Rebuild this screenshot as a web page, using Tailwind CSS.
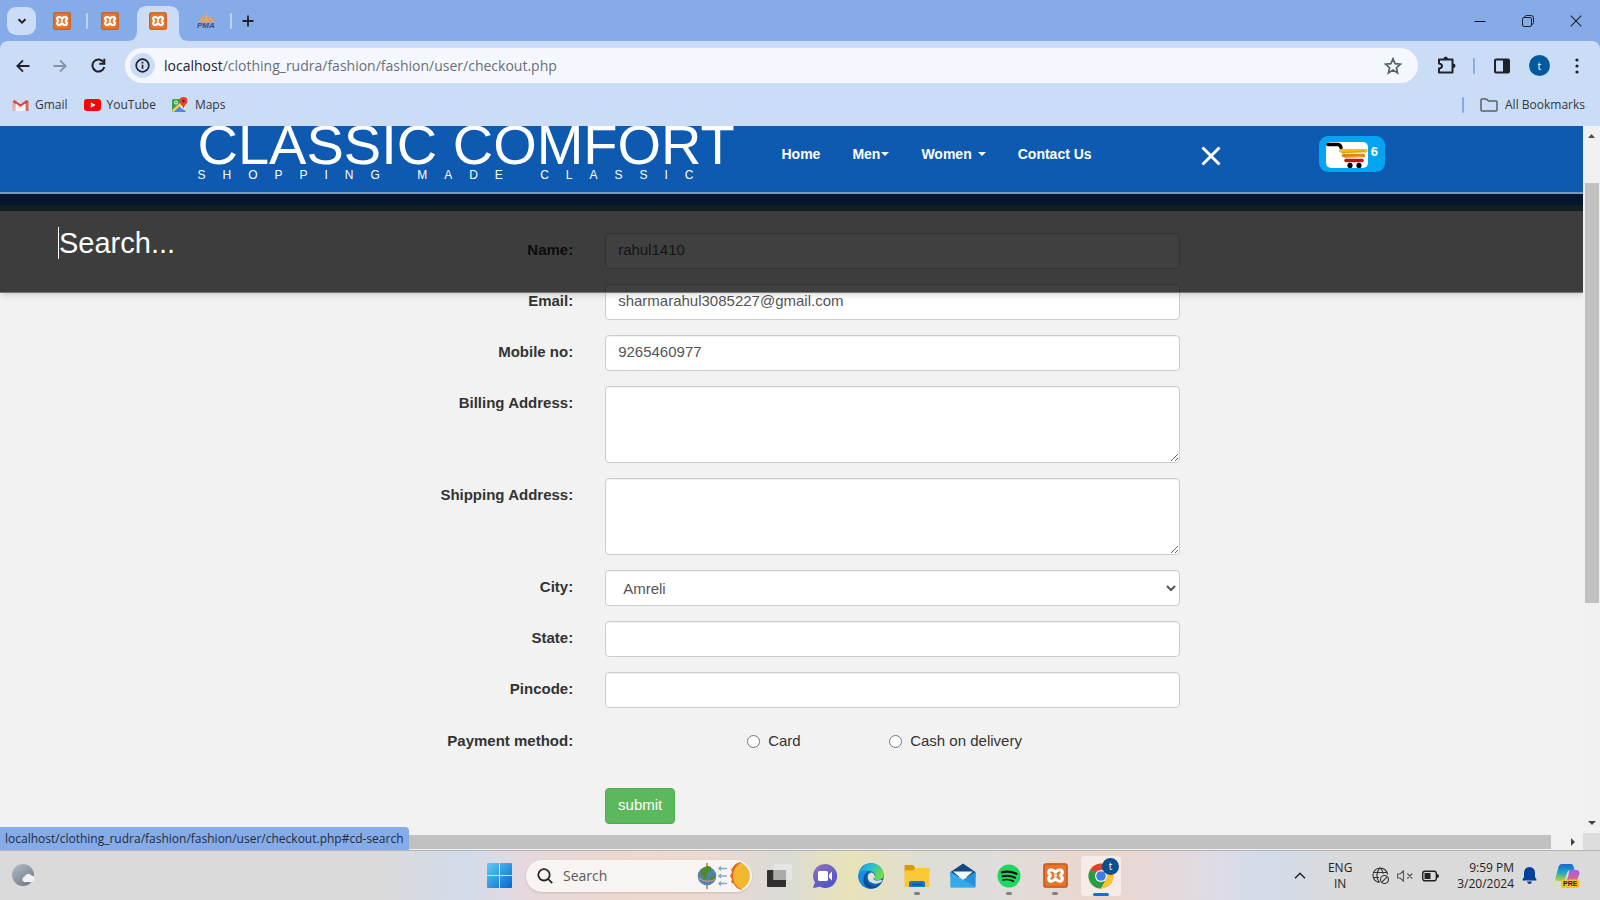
<!DOCTYPE html>
<html lang="en">
<head>
<meta charset="utf-8">
<meta name="viewport" content="width=device-width, initial-scale=1">
<title>Classic Comfort - Checkout</title>
<script src="https://cdn.jsdelivr.net/npm/@tailwindcss/browser@4"></script>
</head>
<body class="flex h-screen flex-col overflow-hidden bg-[#f2f2f2] font-['Liberation_Sans',sans-serif]">

<svg class="hidden" aria-hidden="true">
  <symbol id="xampp" viewBox="0 0 24 24">
    <rect x=".5" y=".5" width="23" height="23" rx="2.5" fill="#e8742a"/>
    <rect x="1" y="1" width="22" height="22" rx="2" fill="none" stroke="#c65a1c" stroke-width="1.5"/>
    <path d="M8 6.500Q10 6.500 12 9q2-2.500 4-2.500a2.500 2.500 0 0 1 1.500 4.500q-1 1 0 2a2.500 2.500 0 0 1-1.500 4.500q-2 0-4-2.500-2 2.500-4 2.500A2.500 2.500 0 0 1 6.500 13q1-1 0-2A2.500 2.500 0 0 1 8 6.500z" fill="none" stroke="#fff" stroke-width="3" stroke-linejoin="round"/>
    <path d="M10.500 12h3" stroke="#fff" stroke-width="2"/>
  </symbol>
</svg>

<!-- Browser frame -->
<header class="shrink-0 bg-[#85abe9] font-['Open_Sans','Noto_Sans',sans-serif] text-[#1f2329]">
  <div class="flex h-[41px] items-center">
    <button aria-label="Search tabs" class="ml-[7px] mr-[2px] flex h-7 w-[29px] items-center justify-center rounded-[9px] bg-[#cbdcf6]">
      <svg class="size-3" viewBox="0 0 12 12" fill="none" stroke="#1f2329" stroke-width="2"><path d="M2.500 4.200 6 7.700l3.500-3.500"/></svg>
    </button>
    <nav aria-label="Tabs" class="flex h-full items-center">
      <button aria-label="XAMPP tab 1" class="flex h-full w-12 items-center justify-center"><svg class="size-[18px]"><use href="#xampp"/></svg></button>
      <span class="h-4 w-[2px] -mr-[2px] rounded bg-[#bed2f4]"></span>
      <button aria-label="XAMPP tab 2" class="flex h-full w-12 items-center justify-center"><svg class="size-[18px]"><use href="#xampp"/></svg></button>
      <button aria-label="XAMPP active tab" class="relative flex h-full w-12 items-center justify-center">
        <svg class="absolute bottom-0 -left-[7px] h-[35px] w-[62px]" viewBox="0 0 62 35"><path d="M0 35Q10 35 10 25V10Q10 0 20 0H42Q52 0 52 10V25Q52 35 62 35Z" fill="#cbdcf6"/></svg>
        <svg class="relative size-[18px]"><use href="#xampp"/></svg>
      </button>
      <button aria-label="phpMyAdmin tab" class="flex h-full w-12 items-center justify-center">
        <svg class="h-[17px] w-[18px]" viewBox="0 0 18 17"><path d="M1.500 10.500Q4 7 6 3.500L6.500 10zM7 10.500Q8 5 8.500.5 12 5 12 10zM12.500 10Q13 6 12.500 3.500 16 7 16.500 10z" fill="#f0a050"/><text x="0" y="16" font-family="Liberation Sans" font-size="8" font-weight="bold" font-style="italic" fill="#3d4a85">PMA</text></svg>
      </button>
      <span class="h-4 w-[2px] rounded bg-[#bed2f4]"></span>
      <button aria-label="New tab" class="flex h-full w-8 items-center justify-center">
        <svg class="size-3" viewBox="0 0 12 12" stroke="#1f2329" stroke-width="1.800"><path d="M6 .5v11M.5 6h11"/></svg>
      </button>
    </nav>
    <div class="ml-auto flex h-full">
      <button aria-label="Minimize" class="flex w-12 items-center justify-center"><svg class="size-3" viewBox="0 0 12 12" stroke="#111"><path d="M.5 6.500h11"/></svg></button>
      <button aria-label="Restore" class="flex w-12 items-center justify-center"><svg class="size-3" viewBox="0 0 12 12" fill="none" stroke="#222"><rect x=".5" y="2.500" width="9" height="9" rx="1.500"/><path d="M2.500 2Q3 .5 4.500.5H9Q11.500.5 11.500 3V7.500Q11.500 9 10 9.500"/></svg></button>
      <button aria-label="Close" class="flex w-12 items-center justify-center"><svg class="size-3" viewBox="0 0 12 12" stroke="#222" stroke-width="1.100"><path d="m.7.700 10.600 10.600M11.300.7.700 11.300"/></svg></button>
    </div>
  </div>

  <div class="rounded-t-lg bg-[#cbdcf6]">
    <div class="flex h-[49px] items-center pl-1 pr-[5px]">
      <button aria-label="Back" class="flex w-[37px] justify-center"><svg class="size-[14px]" viewBox="0 0 14 14" fill="none" stroke="#1f2329" stroke-width="1.800"><path d="M13.500 7H1.500M7 1.300 1.300 7 7 12.700"/></svg></button>
      <button aria-label="Forward" class="flex w-[37px] justify-center"><svg class="size-[14px]" viewBox="0 0 14 14" fill="none" stroke="#8591a6" stroke-width="1.800"><path d="M.5 7h12M7 1.300 12.700 7 7 12.700"/></svg></button>
      <button aria-label="Reload" class="flex w-10 justify-center"><svg class="size-[15px]" viewBox="0 0 15 15" fill="none" stroke="#1f2329" stroke-width="2"><path d="M12.500 4.200A6 6 0 1 0 13.300 9"/><path d="M13.300.8v5H8.300"/></svg></button>
      <div class="ml-[7px] flex h-[35px] flex-1 items-center rounded-full bg-[#f4f8fe] pl-[5px] pr-4">
        <button aria-label="Site information" class="flex size-[25px] items-center justify-center rounded-full bg-[#cbdcf6]"><svg class="size-[15px]" viewBox="0 0 15 15" fill="none" stroke="#1f2329" stroke-width="1.700"><circle cx="7.500" cy="7.500" r="6.300"/><path d="M7.500 6.800v4M7.500 3.800v1.700"/></svg></button>
        <p class="ml-[9px] flex-1 text-[14px] leading-5 text-[#6a6e75]"><span class="text-[#1f2329]">localhost</span>/clothing_rudra/fashion/fashion/user/checkout.php</p>
        <button aria-label="Bookmark this page"><svg class="size-[18px]" viewBox="0 0 18 18" fill="none" stroke="#5b5f66" stroke-width="1.700"><path d="m9 1.800 2.100 4.900 5.300.5-4 3.500 1.200 5.200L9 13.100l-4.600 2.800 1.200-5.200-4-3.500 5.300-.5z"/></svg></button>
      </div>
      <button aria-label="Extensions" class="ml-[10px] flex w-9 justify-center"><svg class="size-[19px]" viewBox="0 0 19 19" fill="none" stroke="#1f2329" stroke-width="2"><path d="M2 3.500h13.500v13H2v-4q3-.5 3-2.500T2 7.500z" stroke-linejoin="round"/><path d="M6.500 3q0-2.500 2.200-2.500T11 3zM16 7.500q2.500 0 2.500 2.300T16 12z" fill="#1f2329" stroke="none"/></svg></button>
      <span class="mx-[9px] h-4 w-[2px] rounded bg-[#85abe9]"></span>
      <button aria-label="Side panel" class="flex w-9 justify-center"><svg class="size-4" viewBox="0 0 16 16"><rect x="1" y="1.500" width="14" height="13" rx="1" fill="none" stroke="#1f2329" stroke-width="2"/><path d="M9 2h6v12H9z" fill="#1f2329"/></svg></button>
      <button aria-label="Profile" class="mx-[9px] flex size-[21px] items-center justify-center rounded-full bg-[#04599c] text-[11px] leading-none text-white">t</button>
      <button aria-label="Browser menu" class="flex w-9 justify-center"><svg class="h-4 w-1" viewBox="0 0 4 16" fill="#1f2329"><circle cx="2" cy="2" r="1.600"/><circle cx="2" cy="8" r="1.600"/><circle cx="2" cy="14" r="1.600"/></svg></button>
    </div>
    <div class="flex h-9 items-center gap-4 pl-[12px] pr-[15px] pb-[7px] text-[12px] leading-4 text-[#33373d]">
      <a href="#" class="flex items-center gap-[6px]"><svg class="h-3 w-[17px]" viewBox="0 0 17 12"><path d="M1.800 12V2" stroke="#e8a8a4" stroke-width="2.600"/><path d="M15.200 12V2" stroke="#d9655c" stroke-width="2.600"/><path d="M1.500 1.700 8.500 7l7-5.300" fill="none" stroke="#d9463c" stroke-width="2.600"/><path d="M4 4.500V12h9V4.500L8.500 8z" fill="#f3f3f6"/></svg>Gmail</a>
      <a href="#" class="flex items-center gap-[6px]"><svg class="h-3 w-[17px]" viewBox="0 0 17 12"><rect width="17" height="12" rx="3" fill="#f00"/><path d="m6.800 3.300 4.700 2.700-4.700 2.700z" fill="#fff"/></svg>YouTube</a>
      <a href="#" class="flex items-center gap-[7px]"><svg class="size-4" viewBox="0 0 16 16"><rect y="2" width="14" height="13" rx="1.500" fill="#34a352"/><path d="m1 15 6-6 6 6z" fill="#4b86ee"/><path d="M6 10 12.500 3 14 5v9z" fill="#dfe6ee"/><path d="m0 13 10-9 2 2-10 9H1z" fill="#f8cc46"/><path d="m2 15 5.500-5.500L13 15z" fill="#4b86ee"/><circle cx="4" cy="5.500" r="1.500" fill="none" stroke="#fff"/><path d="M11.500 0A4 4 0 0 1 15.500 4c0 2.500-2.700 3.500-4 7.500-1.300-4-4-5-4-7.500A4 4 0 0 1 11.500 0z" fill="#e14536"/><circle cx="11.500" cy="4" r="1.400" fill="#8e1a12"/></svg>Maps</a>
      <a href="#" class="ml-auto flex items-center gap-[7px]"><span class="mr-[9px] h-4 w-[2px] rounded bg-[#85abe9]"></span><svg class="h-[14px] w-[18px]" viewBox="0 0 18 14" fill="none" stroke="#5b5f66" stroke-width="1.500"><path d="M1 2q0-1 1-1h4.500l2 2H16q1 0 1 1v8q0 1-1 1H2q-1 0-1-1z"/></svg>All Bookmarks</a>
    </div>
  </div>
</header>

<!-- Page viewport -->
<div class="relative flex min-h-0 flex-1">
  <main class="relative min-w-0 flex-1 overflow-hidden bg-[#f2f2f2] text-[15px] leading-5 text-[#333]">
    <div class="h-[85px] border-b-[6px] border-[#48748f] bg-[#0e5ab0] text-white">
      <div class="mx-auto flex h-[66px] max-w-[1214px] items-end pl-[13px]">
        <a href="#" class="block w-[584px] shrink-0 whitespace-nowrap pb-[9px]">
          <span class="block text-[56px] leading-[44px]">CLASSIC COMFORT</span>
          <span class="block text-[12px] leading-4 tracking-[17px]">SHOPPING MADE CLASSIC</span>
        </a>
        <nav class="flex gap-8 whitespace-nowrap pb-[28px] text-[14px] leading-5 font-bold">
          <a href="#">Home</a>
          <a href="#" class="flex items-center">Men<svg class="ml-px h-1 w-2" viewBox="0 0 8 4" fill="#fff"><path d="M0 0h8L4 4z"/></svg></a>
          <a href="#" class="flex items-center">Women<svg class="ml-[6px] h-1 w-2" viewBox="0 0 8 4" fill="#fff"><path d="M0 0h8L4 4z"/></svg></a>
          <a href="#">Contact Us</a>
        </nav>
        <a href="#cd-search" aria-label="Close search" class="ml-[109px] mb-[26px]"><svg class="size-5" viewBox="0 0 20 20" stroke="#fff" stroke-width="3"><path d="m1.500 1.500 17 17M18.500 1.500l-17 17"/></svg></a>
        <a href="#" aria-label="Cart, 6 items" class="ml-[98px] mb-[20px] flex h-9 w-[66px] rounded-[9px] bg-[#03a5f3] pl-[7px] pt-[6px] text-[13px] leading-5 font-bold">
          <svg class="mr-[3px] h-[26px] w-[42px]" viewBox="0 0 42 26"><rect width="42" height="26" rx="5" fill="#fff"/><path d="M2 2.500h10q2 0 3 3" fill="none" stroke="#000" stroke-width="3.500" stroke-linecap="round"/><g fill="none" stroke-linecap="round" stroke-width="3.400"><path d="M14.500 8.800h25.500" stroke="#eec117"/><path d="M16 10.800l22-1.500" stroke="#d9a514" stroke-width="1.500"/><path d="M17.500 13.500h20" stroke="#de8614"/><path d="M19 15.500l16-1" stroke="#e8ae20" stroke-width="1.500"/><path d="M20 18.500h16" stroke="#c01414" stroke-width="3.500"/></g><circle cx="24" cy="23.400" r="2.600"/><circle cx="33" cy="23.400" r="2.600"/></svg>
          <span>6</span>
        </a>
      </div>
    </div>

    <form class="mx-auto grid max-w-[1214px] grid-cols-12 gap-y-[15px] pt-[22px]" onsubmit="return false">
      <label for="name" class="col-span-4 px-4 pt-[7px] text-right font-bold">Name:</label>
      <div class="col-span-8 grid grid-cols-4"><div class="col-span-3 px-4"><input id="name" value="rahul1410" class="block h-9 w-full rounded-[4px] border border-[#ccc] bg-white px-3 pb-1 text-[#555] inset-shadow-2xs"></div></div>
      <label for="email" class="col-span-4 px-4 pt-[7px] text-right font-bold">Email:</label>
      <div class="col-span-8 grid grid-cols-4"><div class="col-span-3 px-4"><input id="email" type="email" value="sharmarahul3085227@gmail.com" class="block h-9 w-full rounded-[4px] border border-[#ccc] bg-white px-3 pb-1 text-[#555] inset-shadow-2xs"></div></div>
      <label for="mobile" class="col-span-4 px-4 pt-[7px] text-right font-bold">Mobile no:</label>
      <div class="col-span-8 grid grid-cols-4"><div class="col-span-3 px-4"><input id="mobile" value="9265460977" class="block h-9 w-full rounded-[4px] border border-[#ccc] bg-white px-3 pb-1 text-[#555] inset-shadow-2xs"></div></div>
      <label for="billing" class="col-span-4 px-4 pt-[7px] text-right font-bold">Billing Address:</label>
      <div class="col-span-8 grid grid-cols-4"><div class="col-span-3 px-4"><textarea id="billing" class="block h-[77px] w-full rounded-[4px] border border-[#ccc] bg-white px-3 py-[6px] text-[#555] inset-shadow-2xs"></textarea></div></div>
      <label for="shipping" class="col-span-4 px-4 pt-[7px] text-right font-bold">Shipping Address:</label>
      <div class="col-span-8 grid grid-cols-4"><div class="col-span-3 px-4"><textarea id="shipping" class="block h-[77px] w-full rounded-[4px] border border-[#ccc] bg-white px-3 py-[6px] text-[#555] inset-shadow-2xs"></textarea></div></div>
      <label for="city" class="col-span-4 px-4 pt-[7px] text-right font-bold">City:</label>
      <div class="col-span-8 grid grid-cols-4"><div class="col-span-3 px-4"><select id="city" class="block h-9 w-full rounded-[4px] border border-[#ccc] bg-white pl-[13px] text-[#555] inset-shadow-2xs"><option>Amreli</option></select></div></div>
      <label for="state" class="col-span-4 px-4 pt-[7px] text-right font-bold">State:</label>
      <div class="col-span-8 grid grid-cols-4"><div class="col-span-3 px-4"><input id="state" class="block h-9 w-full rounded-[4px] border border-[#ccc] bg-white px-3 text-[#555] inset-shadow-2xs"></div></div>
      <label for="pincode" class="col-span-4 px-4 pt-[7px] text-right font-bold">Pincode:</label>
      <div class="col-span-8 grid grid-cols-4"><div class="col-span-3 px-4"><input id="pincode" class="block h-9 w-full rounded-[4px] border border-[#ccc] bg-white px-3 text-[#555] inset-shadow-2xs"></div></div>
      <span id="pay" class="col-span-4 px-4 pt-2 text-right font-bold">Payment method:</span>
      <div role="radiogroup" aria-labelledby="pay" class="col-span-8 flex h-[50px] pt-2 pl-[158px]">
        <label class="flex h-5 w-[142px] items-center gap-2"><input type="radio" name="payment" class="size-[13px]">Card</label>
        <label class="flex h-5 items-center gap-2"><input type="radio" name="payment" class="size-[13px]">Cash on delivery</label>
      </div>
      <div class="col-span-8 col-start-5 px-4"><button class="h-9 w-[70px] rounded-[4px] border border-[#4cae4c] bg-[#5cb85c] pb-[2px] text-white">submit</button></div>
    </form>

    <!-- Search panel opened over the page -->
    <div id="cd-search" class="absolute inset-x-0 top-[66px] h-[101px] border-t-2 border-b border-t-[#7b99bf] border-b-[#777] bg-black/75 bg-clip-padding shadow-md">
      <input type="search" aria-label="Search" placeholder="Search..." class="ml-[58px] mt-[33px] block h-8 w-4/5 border-l border-white bg-transparent text-[29px] leading-8 text-white outline-none placeholder:text-white">
    </div>

    <div class="absolute inset-x-0 bottom-0 flex h-[17px] items-center justify-between bg-[#f1f1f1]" aria-hidden="true">
      <span class="h-[14px] w-[98%] bg-[#c1c1c1]"></span>
      <svg class="mr-2 h-2 w-1" viewBox="0 0 4 8" fill="#444"><path d="M0 0v8l4-4z"/></svg>
    </div>
  </main>

  <div class="flex w-[17px] flex-col items-center bg-[#f1f1f1]" aria-hidden="true">
    <svg class="mt-2 h-1 w-[7px]" viewBox="0 0 7 4" fill="#505050"><path d="M0 4h7L3.500 0z"/></svg>
    <span class="mt-[45px] h-[58%] w-[14px] bg-[#c1c1c1]"></span>
    <svg class="mt-auto h-1 w-2" viewBox="0 0 8 4" fill="#444"><path d="M0 0h8L4 4z"/></svg>
    <span class="mt-2 h-[17px] w-full bg-[#dcdcdc]"></span>
  </div>

  <div class="absolute bottom-0 left-0 h-[23px] whitespace-nowrap rounded-tr-[4px] bg-[#85abe9] px-[5px] font-['Open_Sans','Noto_Sans',sans-serif] text-[12px] leading-[23px] text-[#232b38]">localhost/clothing_rudra/fashion/fashion/user/checkout.php#cd-search</div>
</div>

<!-- Taskbar -->
<footer class="grid h-[50px] shrink-0 grid-cols-[1fr_auto_1fr] items-center border-t border-[#b3b3b3] bg-[linear-gradient(90deg,#dadada_24%,#d2dcec_29%,#e6d8dc_33%,#edd8ce_39%,#ecd9d0_44%,#dadbd8_49%,#e8e3b8_53%,#deddd5_58%,#dfdddb_62%,#ecd6cc_69%,#dedbe6_76%,#d2dcea_79%,#dadada_84%)] font-['Open_Sans','Noto_Sans',sans-serif] text-[#242424]">
  <button aria-label="Weather" class="ml-3 w-6"><svg class="size-[23px]" viewBox="0 0 23 23"><defs><linearGradient id="moon" x2=".7" y2="1"><stop stop-color="#b4bcc4"/><stop offset="1" stop-color="#737e89"/></linearGradient></defs><circle cx="11" cy="11" r="11" fill="url(#moon)"/><path d="M12 18a3 3 0 0 1 .5-5.500 4 4 0 0 1 7-1A3.300 3.300 0 0 1 20 18z" fill="#eef1f5"/></svg></button>
  <div class="flex h-[49px] items-center">
    <button aria-label="Start" class="flex w-[46px] justify-center"><svg class="size-[25px]" viewBox="0 0 25 25"><defs><linearGradient id="win" x2="1" y2="1"><stop stop-color="#5dcdf8"/><stop offset="1" stop-color="#0566cd"/></linearGradient></defs><path d="M0 1q0-1 1-1h11v12H0zM13 0h11q1 0 1 1v11H13zM0 13h12v12H1q-1 0-1-1zM13 13h12v11q0 1-1 1H13z" fill="url(#win)"/></svg></button>
    <label class="mx-1 flex h-8 w-[226px] items-center rounded-full bg-[#f8f4f2] pl-[11px] pr-[2px] shadow-sm">
      <svg class="size-4" viewBox="0 0 16 16" fill="none" stroke="#242424" stroke-width="1.800"><circle cx="7" cy="6.800" r="5.700"/><path d="m11.200 11 4 4.200"/></svg>
      <input aria-label="Search Windows" placeholder="Search" class="ml-[10px] min-w-0 flex-1 bg-transparent text-[14px] outline-none placeholder:text-[#5b5856]">
      <svg class="h-7 w-[53px]" viewBox="0 0 53 28"><path d="M10 1v26" stroke="#d66a3c" stroke-width="1.500"/><circle cx="10" cy="14" r="9.300" fill="#4e82b4"/><path d="M5 7q5-5 9-2 1 4-2 5t-2 6q-2 3-4-1t-3-3 2-5zM13 15q4-3 5 0-1 4-4 5z" fill="#4b8c2c"/><path d="M1 16q9 6 18 1" fill="none" stroke="#d89478" stroke-width="1.200"/><g fill="none" stroke="#8ca9c4" stroke-width="1.600"><path d="M22 6.500h8M24 4.500l-2 2 2 2M22 14h8M24 12l-2 2 2 2M22 21.500h8M24 19.500l-2 2 2 2"/></g><path d="M44 0q-6 1-8 5l-2 3 1 2-2 4 2 3-1 3 3 2q2 5 8 6z" fill="#e36a20"/><path d="M44 .5q9 5 9 13.500t-9 13.500q-8-5-8-13.500T44 .5z" fill="#f2b72c"/></svg>
    </label>
    <button aria-label="Task view" class="flex w-[46px] justify-center"><svg class="size-[25px]" viewBox="0 0 25 25"><rect y="7" width="19" height="17" rx="1" fill="#303030"/><rect x="6.500" y="1" width="18.500" height="16" rx="1" fill="#e6e6e6" fill-opacity=".85"/><path d="M6.500 7H19v10H6.500z" fill="#aaa"/></svg></button>
    <button aria-label="Chat" class="flex w-[46px] justify-center"><svg class="size-6" viewBox="0 0 24 24"><defs><linearGradient id="chat" x2=".6" y2="1"><stop stop-color="#9675b8"/><stop offset="1" stop-color="#5052c8"/></linearGradient></defs><path d="M12 0a12 12 0 1 1-5.500 22.600Q3 24 .5 24q-.5 0 0-2l1.500-3.500A12 12 0 0 1 12 0z" fill="url(#chat)"/><rect x="5" y="7" width="10" height="10" rx="1.500" fill="#fff"/><path d="m16 10.500 3-3v9l-3-3z" fill="#fff"/></svg></button>
    <button aria-label="Edge" class="flex w-[46px] justify-center"><svg class="size-[26px]" viewBox="0 0 26 26"><defs><linearGradient id="edge" x2="1" y2=".4"><stop stop-color="#1798dc"/><stop offset=".5" stop-color="#28bdd2"/><stop offset="1" stop-color="#6add48"/></linearGradient></defs><circle cx="13" cy="13" r="12.700" fill="#0f65b8"/><path d="M.5 12Q2 .3 13 .3T25.700 11q0 6-6 6-4 0-4-2l1.500-2q0-4-5-5Q3 7 .5 12z" fill="url(#edge)"/><path d="M.4 11Q4 6 10 8q-4 3-3 9 1 6 6 8.700Q2 25 .4 15z" fill="#188ddb"/><path d="M10 9q-5 8 2 13 6 3 11-2Q19 26 12 25.500 4 23 5.500 15 6.500 11 10 9z" fill="#0a4b9a"/><path d="M10.500 11q-2 4 1 7.500 5 4 12 .5l1-2-5 .5q-4 0-4-2l1.500-2q-1-4-4-4z" fill="#e2e1d6"/></svg></button>
    <button aria-label="File Explorer" class="relative flex h-full w-[46px] items-center justify-center"><svg class="size-[26px]" viewBox="0 0 26 26"><path d="M.5 3q0-1 1-1H9l2 2.500V10H.5z" fill="#d79a16"/><path d="M.5 7.500h9l2-2.500H25q.5 0 .5 1v18H.5z" fill="#fbc938"/><path d="M5 24v-4q0-2 2-2h12q2 0 2 2v4z" fill="#1876c4"/><path d="M8 21.500h10" stroke="#0b4f94" stroke-width="1.500"/></svg><span class="absolute bottom-[5px] h-[3px] w-[6px] rounded-full bg-[#857f7b]"></span></button>
    <button aria-label="Mail" class="flex w-[46px] justify-center"><svg class="h-[25px] w-[26px]" viewBox="0 0 26 25"><path d="M.5 9 13 .5 25.500 9v5H.5z" fill="#134a86"/><path d="M3 8.500h20L13 17z" fill="#f4f7fb"/><path d="M.5 9 13 17 25.500 9v15q0 .5-1 .5h-23q-1 0-1-.5z" fill="#46bff2"/><path d="m13 17 12.500 7.500H1.500L.5 24V9z" fill="#35aaea"/><path d="m13 17 12.500-8v15z" fill="#2391dc"/></svg></button>
    <button aria-label="Spotify" class="relative flex h-full w-[46px] items-center justify-center"><svg class="size-6" viewBox="0 0 24 24"><circle cx="12" cy="12" r="11.500" fill="#1ed760"/><g fill="none" stroke="#111" stroke-linecap="round"><path d="M5 8.300q7.500-2 14.500 1.500" stroke-width="2.300"/><path d="M5.500 12.300q6.500-1.800 12.500 1.400" stroke-width="2"/><path d="M6 16q5.500-1.500 10.500 1.300" stroke-width="1.600"/></g></svg><span class="absolute bottom-[5px] h-[3px] w-[6px] rounded-full bg-[#857f7b]"></span></button>
    <button aria-label="XAMPP" class="relative flex h-full w-[46px] items-center justify-center"><svg class="size-[25px]"><use href="#xampp"/></svg><span class="absolute bottom-[5px] h-[3px] w-[6px] rounded-full bg-[#857f7b]"></span></button>
    <button aria-label="Chrome" class="relative mx-[3px] flex h-10 w-10 items-center justify-center rounded-[4px] bg-[#f5ece8]"><svg class="size-[26px]" viewBox="0 0 26 26"><circle cx="13" cy="13" r="12.500" fill="#f9c32c"/><path d="M13 13 2.200 6.700A12.500 12.500 0 0 1 23.800 6.700z" fill="#dd4132"/><path d="M13 7H24L18 10z" fill="#dd4132"/><path d="M2.200 6.700A12.500 12.500 0 0 0 13 25.500L18.200 16 13 13z" fill="#2c9b48"/><path d="M18.200 16 13 25.500A12.500 12.500 0 0 0 24 7H13z" fill="#f9c32c"/><circle cx="13" cy="13" r="6" fill="#fff"/><circle cx="13" cy="13" r="4.800" fill="#3d7de0"/></svg><span class="absolute right-[2px] top-[2px] flex size-[17px] items-center justify-center rounded-full bg-[#07508f] text-[10px] leading-none text-white">t</span><span class="absolute bottom-0 h-[3px] w-4 rounded-full bg-[#1272c8]"></span></button>
  </div>
  <div class="flex items-center justify-end pr-5 text-[12px] leading-4">
    <button aria-label="Show hidden icons" class="mr-5"><svg class="h-[7px] w-3" viewBox="0 0 12 7" fill="none" stroke="#242424" stroke-width="1.500"><path d="m1 6.300 5-5 5 5"/></svg></button>
    <button aria-label="Input language" class="mr-[18px] w-7 text-center">ENG<br>IN</button>
    <svg class="mr-2 size-[17px]" viewBox="0 0 17 17" fill="none" stroke="#333" stroke-width="1.100"><path d="M7.500 15.500A7.300 7.300 0 1 1 15.500 7.500M1 5.500h14M1 10.500h6M8 .7q-6 7.300-.5 14.800M8 .7q3 3 3.200 6"/><circle cx="12.500" cy="12.500" r="4"/><path d="m9.800 15.200 5.400-5.400"/></svg>
    <svg class="mr-[9px] h-3 w-4" viewBox="0 0 16 12" fill="none" stroke="#555" stroke-width="1.100"><path d="M.6 4v4h2.500l3.400 3.200V.8L3.100 4zM10.300 3.500l5 5M15.300 3.500l-5 5"/></svg>
    <svg class="mr-[18px] h-3 w-[17px]" viewBox="0 0 17 12"><rect x=".7" y="1.200" width="13.600" height="9.600" rx="2.200" fill="none" stroke="#222" stroke-width="1.400"/><path d="M2.500 3h6v6h-6zM15 4q2 0 2 2t-2 2z" fill="#222"/></svg>
    <button aria-label="Clock" class="mr-2 whitespace-nowrap text-right">9:59 PM<br>3/20/2024</button>
    <button aria-label="Notifications" class="mr-[18px]"><svg class="h-[17px] w-[15px]" viewBox="0 0 15 17" fill="#07409a"><path d="M7.500 0Q13 .5 13 6v4l1.500 2.500v1H.5v-1L2 10V6Q2 .5 7.500 0zM5 14.500h5Q9.500 17 7.500 17T5 14.500z"/></svg></button>
    <button aria-label="Copilot preview"><svg class="h-6 w-[25px]" viewBox="0 0 25 24"><defs><linearGradient id="cpa" x2="0" y2="1"><stop stop-color="#1864cf"/><stop offset=".5" stop-color="#20a8c4"/><stop offset="1" stop-color="#bfd032"/></linearGradient><linearGradient id="cpb" x2="0" y2="1"><stop stop-color="#a65ee6"/><stop offset="1" stop-color="#ee6488"/></linearGradient></defs><path d="M7 0h9q2 0 3 4l.5 2H15q-2 0-3 3l-2 6q-1 2-3 2H3q-3 0-2.500-3L3.500 3Q4.500 0 7 0z" fill="url(#cpa)"/><path d="M15 6h6q4 0 3.500 4l-2 5q-1 3-4 3H10q2-1 3-5l1-5q0-2 1-2z" fill="url(#cpb)"/><rect x="6" y="15.500" width="18.500" height="8.500" rx="2" fill="#f8c02c"/><text x="8" y="22" font-family="Liberation Sans" font-size="7" font-weight="bold" fill="#222">PRE</text></svg></button>
  </div>
</footer>
</body>
</html>
